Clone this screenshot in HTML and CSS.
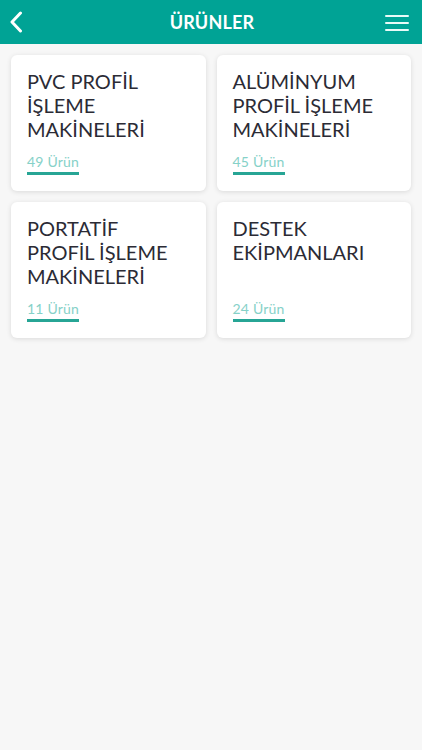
FILE: index.html
```html
<!DOCTYPE html>
<html lang="tr">
<head>
    <meta charset="UTF-8">
    <meta name="viewport" content="width=device-width, initial-scale=1.0">
    <title>Ürünler</title>
    <link rel="stylesheet" href="styles.css">
</head>
<body>
    <header class="top-bar">
        <a class="back-btn" href="#">
            <svg width="14" height="22" viewBox="0 0 14 22"><path d="M11.5 2 L3 11 L11.5 20" fill="none" stroke="#fff" stroke-width="3" stroke-linecap="round" stroke-linejoin="round"/></svg>
        </a>
        <h1 class="page-title">ÜRÜNLER</h1>
        <a class="menu-btn" href="#">
            <span></span><span></span><span></span>
        </a>
    </header>

    <main class="category-grid">
        <div class="category-card">
            <h2 class="category-name">PVC PROFİL İŞLEME MAKİNELERİ</h2>
            <span class="product-count">49 Ürün</span>
        </div>
        <div class="category-card">
            <h2 class="category-name">ALÜMİNYUM PROFİL İŞLEME MAKİNELERİ</h2>
            <span class="product-count">45 Ürün</span>
        </div>
        <div class="category-card">
            <h2 class="category-name">PORTATİF PROFİL İŞLEME MAKİNELERİ</h2>
            <span class="product-count">11 Ürün</span>
        </div>
        <div class="category-card">
            <h2 class="category-name">DESTEK EKİPMANLARI</h2>
            <span class="product-count">24 Ürün</span>
        </div>
    </main>
</body>
</html>
```

FILE: styles.css
```css
body {
    margin: 0;
    font-family: 'Lato', 'Open Sans', sans-serif;
    background-color: #f7f7f7;
    min-height: 750px;
}
.top-bar {
    height: 44px;
    background: #00a395;
    display: flex;
    align-items: center;
    justify-content: space-between;
    padding: 0 13px 0 9px;
}
.back-btn {
    display: flex;
    width: 30px;
}
.page-title {
    margin: 0;
    color: #fff;
    font-size: 18px;
    font-weight: 700;
    letter-spacing: 0.2px;
}
.menu-btn {
    width: 24px;
    display: flex;
    flex-direction: column;
    gap: 5px;
    padding-top: 1px;
}
.menu-btn span {
    display: block;
    height: 2px;
    background: #e8fbf8;
    border-radius: 1px;
}
.category-grid {
    display: grid;
    grid-template-columns: 1fr 1fr;
    gap: 11px;
    padding: 11px 11px 0 11px;
}
.category-card {
    background: white;
    border-radius: 6px;
    box-shadow: 0 1px 5px rgba(0,0,0,0.12);
    height: 136px;
    box-sizing: border-box;
    padding: 14px 16px 0 16px;
    display: flex;
    flex-direction: column;
}
.category-name {
    margin: 0;
    font-size: 20px;
    font-weight: 400;
    line-height: 24px;
    color: #2b2b35;
    height: 72px;
}
.product-count {
    align-self: flex-start;
    margin-top: 12px;
    font-size: 14px;
    line-height: 18px;
    letter-spacing: 0.2px;
    white-space: nowrap;
    color: #86d1c8;
    padding-bottom: 1px;
    border-bottom: 3px solid #27a595;
}
```
